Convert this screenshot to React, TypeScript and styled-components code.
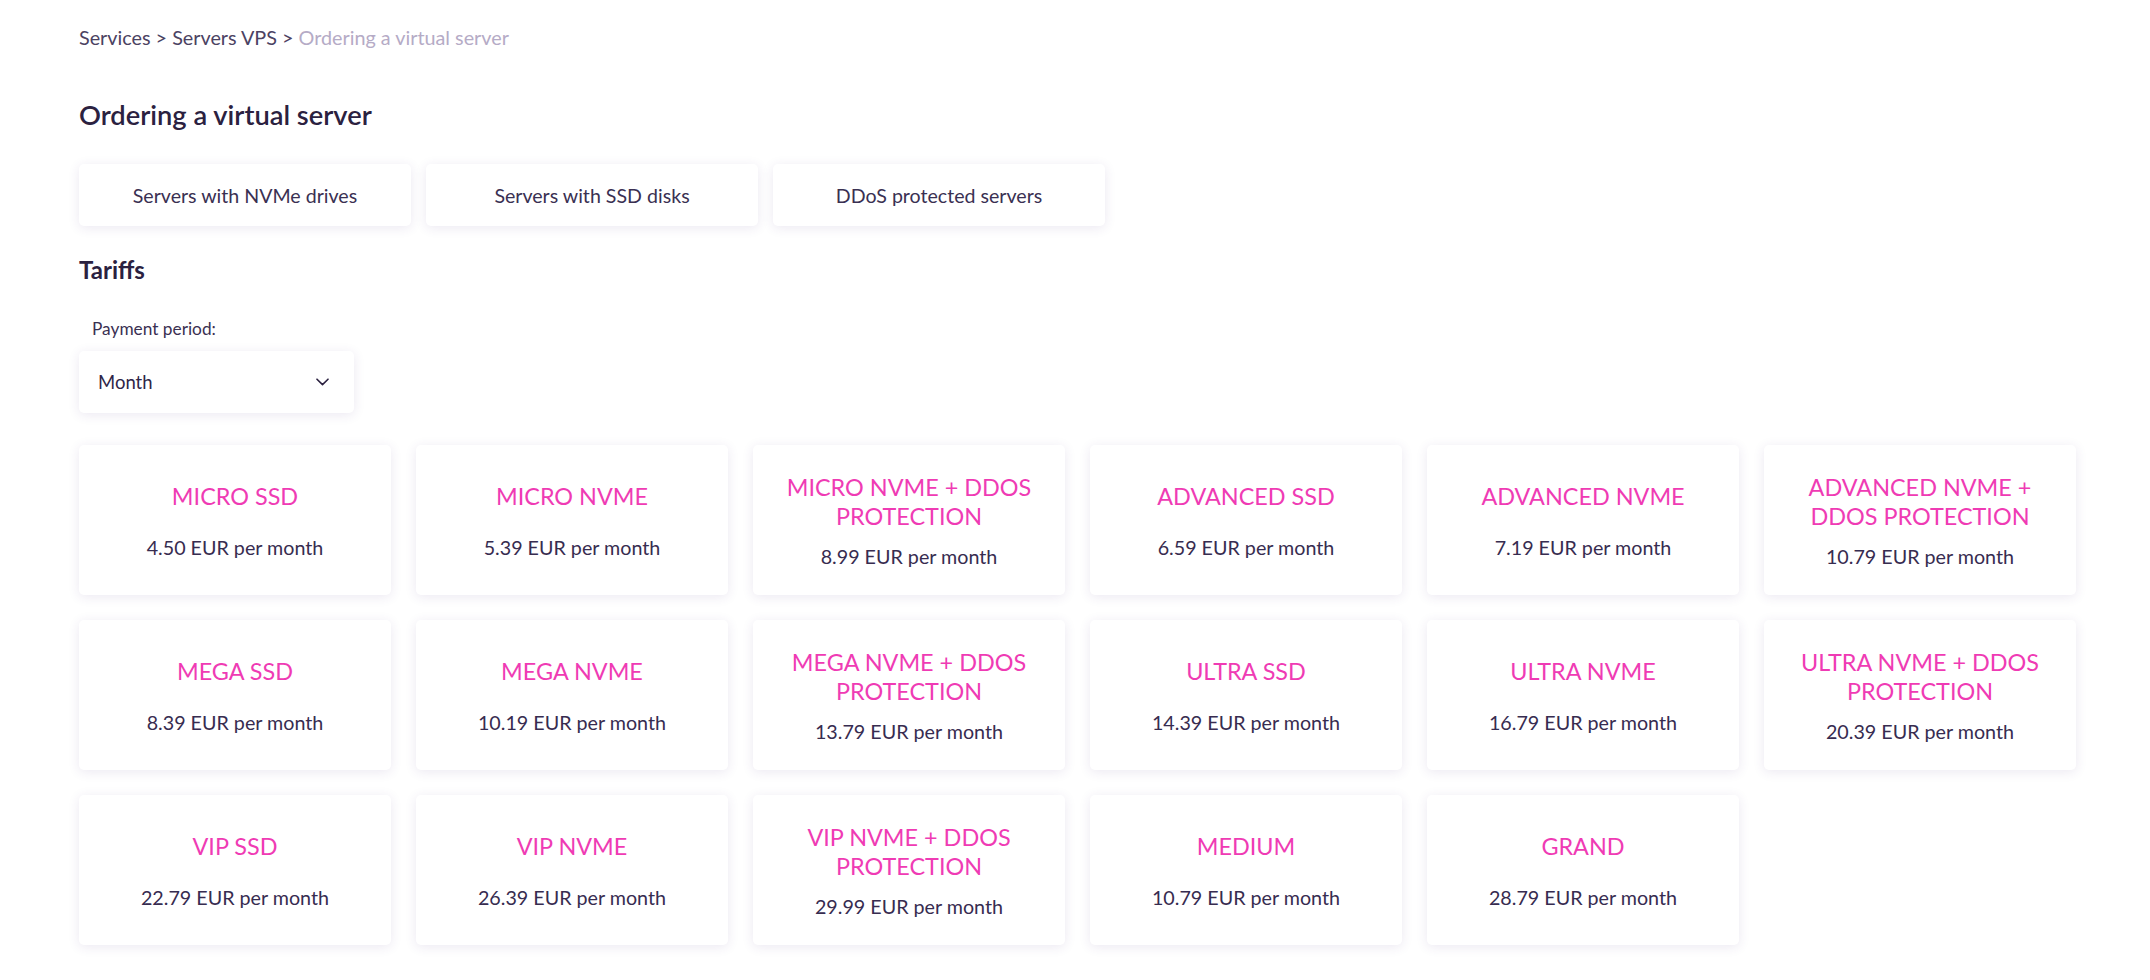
import React from "react";
import styled, { createGlobalStyle } from "styled-components";

const GlobalStyle = createGlobalStyle`
  html, body { margin: 0; padding: 0; background: #ffffff; }
  body {
    font-family: "Lato", "Open Sans", sans-serif;
    color: #2c2243;
    -webkit-font-smoothing: antialiased;
  }
  * { box-sizing: border-box; }
`;

const Page = styled.main`
  padding: 25px 74px 40px 79px;
  display: flex;
  flex-direction: column;
  align-items: flex-start;
`;

const Breadcrumbs = styled.nav`
  font-size: 19.8px;
  line-height: 24px;
  color: #4b4262;
  white-space: nowrap;
`;

const Crumb = styled.span<{ $current?: boolean }>`
  color: ${(p) => (p.$current ? "#b5abc6" : "#4b4262")};
`;

const Title = styled.h1`
  margin: 49px 0 0;
  font-size: 27.3px;
  line-height: 33px;
  font-weight: 600;
  color: #2b2140;
`;

const Tabs = styled.div`
  margin-top: 33px;
  display: flex;
  gap: 15px;
`;

const Tab = styled.button`
  width: 332px;
  height: 62px;
  border: none;
  border-radius: 5px;
  background: #ffffff;
  box-shadow: 0 2px 12px rgba(74, 48, 130, 0.11);
  font-family: inherit;
  font-size: 19.6px;
  color: #3a3052;
  display: flex;
  align-items: center;
  justify-content: center;
  cursor: pointer;
`;

const SectionTitle = styled.h2`
  margin: 29px 0 0;
  font-size: 24px;
  line-height: 29px;
  font-weight: 700;
  color: #2b2140;
`;

const FieldLabel = styled.label`
  margin-top: 34px;
  padding-left: 13px;
  font-size: 17.3px;
  line-height: 21px;
  color: #3a3052;
`;

const Select = styled.div`
  margin-top: 12px;
  width: 275px;
  height: 62px;
  border-radius: 5px;
  background: #ffffff;
  box-shadow: 0 2px 12px rgba(74, 48, 130, 0.11);
  display: flex;
  align-items: center;
  justify-content: space-between;
  padding: 0 25px 0 19px;
  font-size: 18.5px;
  color: #2f2548;
`;

const Chevron = styled.svg`
  width: 13px;
  height: 8px;
  flex: none;
`;

const Grid = styled.div`
  margin-top: 32px;
  display: grid;
  grid-template-columns: repeat(6, 312px);
  gap: 25px;
`;

const Card = styled.div`
  height: 150px;
  border-radius: 5px;
  background: #ffffff;
  box-shadow: 0 2px 12px rgba(74, 48, 130, 0.11);
  display: flex;
  flex-direction: column;
  align-items: center;
  justify-content: center;
  padding: 2px 20px 0;
  text-align: center;
  cursor: pointer;
`;

const CardTitle = styled.div<{ $wrapped?: boolean }>`
  font-size: 23.4px;
  line-height: 29px;
  color: #ef3bb4;
  text-transform: uppercase;
  margin-bottom: ${(p) => (p.$wrapped ? 14.6 : 25)}px;
`;

const Price = styled.div`
  font-size: 19.7px;
  line-height: 24px;
  color: #372c50;
`;

type Tariff = { name: string; price: string; wrapped?: boolean };

const tariffs: Tariff[] = [
  { name: "MICRO SSD", price: "4.50" },
  { name: "MICRO NVME", price: "5.39" },
  { name: "MICRO NVME + DDOS PROTECTION", price: "8.99", wrapped: true },
  { name: "ADVANCED SSD", price: "6.59" },
  { name: "ADVANCED NVME", price: "7.19" },
  { name: "ADVANCED NVME + DDOS PROTECTION", price: "10.79", wrapped: true },
  { name: "MEGA SSD", price: "8.39" },
  { name: "MEGA NVME", price: "10.19" },
  { name: "MEGA NVME + DDOS PROTECTION", price: "13.79", wrapped: true },
  { name: "ULTRA SSD", price: "14.39" },
  { name: "ULTRA NVME", price: "16.79" },
  { name: "ULTRA NVME + DDOS PROTECTION", price: "20.39", wrapped: true },
  { name: "VIP SSD", price: "22.79" },
  { name: "VIP NVME", price: "26.39" },
  { name: "VIP NVME + DDOS PROTECTION", price: "29.99", wrapped: true },
  { name: "MEDIUM", price: "10.79" },
  { name: "GRAND", price: "28.79" },
];

export default function App() {
  return (
    <>
      <GlobalStyle />
      <Page>
        <Breadcrumbs>
          <Crumb>Services &gt; </Crumb>
          <Crumb>Servers VPS &gt; </Crumb>
          <Crumb $current>Ordering a virtual server</Crumb>
        </Breadcrumbs>
        <Title>Ordering a virtual server</Title>
        <Tabs>
          <Tab>Servers with NVMe drives</Tab>
          <Tab>Servers with SSD disks</Tab>
          <Tab>DDoS protected servers</Tab>
        </Tabs>
        <SectionTitle>Tariffs</SectionTitle>
        <FieldLabel>Payment period:</FieldLabel>
        <Select>
          <span>Month</span>
          <Chevron viewBox="0 0 13 8" fill="none">
            <path d="M1 1.2 6.5 6.6 12 1.2" stroke="#2b2140" strokeWidth="1.6" strokeLinecap="round" strokeLinejoin="round" />
          </Chevron>
        </Select>
        <Grid>
          {tariffs.map((t) => (
            <Card key={t.name}>
              <CardTitle $wrapped={t.wrapped}>{t.name}</CardTitle>
              <Price>{t.price} EUR per month</Price>
            </Card>
          ))}
        </Grid>
      </Page>
    </>
  );
}
